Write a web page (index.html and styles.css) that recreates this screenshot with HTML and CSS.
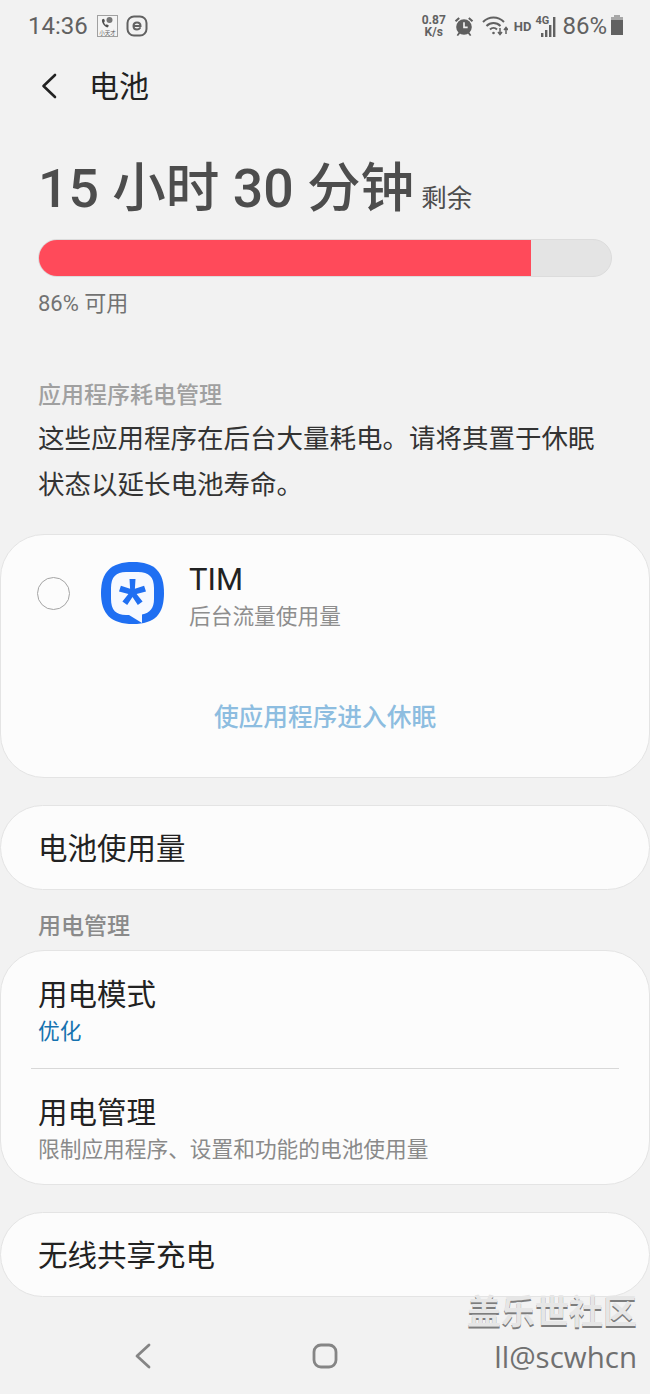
FILE: index.html
```html
<!DOCTYPE html>
<html lang="zh-CN">
<head>
    <meta charset="UTF-8">
    <meta name="viewport" content="width=device-width, initial-scale=1.0">
    <title>电池</title>
    <link rel="stylesheet" href="styles.css">
</head>
<body>
    <div class="status-bar">
        <div class="status-left">
            <span class="clock">14:36</span>
            <span class="app-badge">
                <svg width="21" height="22" viewBox="0 0 21 22" fill="none"><rect x="0.5" y="0.5" width="20" height="21" fill="#f4f4f4" stroke="#a0a0a0"/><path d="M5 4.500c-.5 3 2 7 5.500 8l1.500-1.800-2.200-1.500-1 .8c-1-.8-1.600-1.800-1.800-3l1-.8-1-2.500z" fill="#4f4f4f"/><circle cx="12.500" cy="5" r="3" fill="#777"/><text x="10.500" y="19.500" text-anchor="middle" font-size="5.500" fill="#666">小天才</text></svg>
            </span>
            <svg class="e-badge" width="22" height="22" viewBox="0 0 22 22" fill="none"><rect x="1.500" y="1.500" width="19" height="19" rx="6.500" stroke="#616161" stroke-width="2"/><path d="M7.500 11h7c0-2.200-1.500-3.500-3.500-3.500S7.500 9 7.500 11s1.500 3.500 3.500 3.500c1.300 0 2.300-.5 3-1.500" stroke="#616161" stroke-width="2" stroke-linecap="round"/></svg>
        </div>
        <div class="status-right">
            <span class="net-speed">0.87<br>K/s</span>
            <svg class="alarm" width="22" height="24" viewBox="0 0 24 24" fill="#5f5f5f"><circle cx="12" cy="13" r="8.500"/><path d="M2 6l4-3.500 1.500 1.500-4 3.500zM22 6l-4-3.500L16.500 4l4 3.500zM6 19l-2 3 1.500 1 2.500-3zM18 19l2 3-1.500 1-2.500-3z"/><path d="M12 8v5.500h4" stroke="#f2f2f2" stroke-width="1.800" fill="none"/></svg>
            <svg class="wifi" width="26" height="22" viewBox="0 0 26 22" fill="none" stroke="#616161" stroke-width="2"><path d="M1 7c6-6 15-6 21 0"/><path d="M4.500 11c4-4 10-4 14 0"/><path d="M8 14.500c2-2 5-2 7 0"/><circle cx="11.500" cy="18" r="1.300" fill="#616161" stroke="none"/><path d="M18 13v6M16 17l2 2.500 2-2.500M24 19v-6M22 15l2-2.500 2 2.500" stroke-width="1.500"/></svg>
            <span class="hd">HD</span>
            <span class="signal">
                <span class="lte">4G</span>
                <svg width="22" height="24" viewBox="0 0 22 24" fill="#616161"><rect x="6" y="19" width="2.400" height="4"/><rect x="10" y="16" width="2.400" height="7"/><rect x="14" y="11" width="2.400" height="12"/><rect x="18" y="3" width="2.400" height="20"/></svg>
            </span>
            <span class="battery-pct">86%</span>
            <svg width="14" height="22" viewBox="0 0 14 22" fill="#616161"><rect x="4" y="0" width="6" height="3" fill="#a8a8a8"/><rect x="1" y="2" width="12" height="3" fill="#a8a8a8"/><rect x="1" y="5" width="12" height="15"/></svg>
        </div>
    </div>

    <div class="app-bar">
        <svg class="back" width="24" height="28" viewBox="0 0 24 28" fill="none" stroke="#222" stroke-width="2.600" stroke-linecap="round" stroke-linejoin="round"><path d="M17 3L5.500 14 17 25"/></svg>
        <h1>电池</h1>
    </div>

    <div class="summary">
        <div class="time-left"><span class="time-big">15 小时 30 分钟</span><span class="time-small">剩余</span></div>
        <div class="battery-bar"><div class="battery-fill" style="width: 86%"></div></div>
        <p class="available">86% 可用</p>
    </div>

    <div class="section">
        <div class="section-label">应用程序耗电管理</div>
        <p class="section-text">这些应用程序在后台大量耗电。请将其置于休眠状态以延长电池寿命。</p>
    </div>

    <div class="card app-card">
        <div class="app-row">
            <span class="radio"></span>
            <svg class="tim-icon" width="64" height="64" viewBox="0 0 64 64"><path d="M32 0C54 0 63 10 63 31S54 62 32 62 0 52 0 31 10 0 32 0z" fill="#1f6ff2"/><path d="M25 10h12c11 0 16 5 16 16v11c0 9-4 14-12 15.500V61L28 53h-3C15 53 10 48 10 37V26C10 15 15 10 25 10z" fill="#f6f9ff"/><path d="M28.500 17h6l-.6 9.800 9.200-3 1.900 5.600-9.400 2.600 6 7.600-4.800 3.500-5.300-8-5.300 8-4.800-3.500 6-7.600-9.400-2.600 1.900-5.600 9.200 3z" fill="#1f6ff2"/></svg>
            <div class="app-info">
                <div class="app-name">TIM</div>
                <div class="app-sub">后台流量使用量</div>
            </div>
        </div>
        <div class="sleep-action">使应用程序进入休眠</div>
    </div>

    <div class="card single-row">电池使用量</div>

    <div class="group-label">用电管理</div>

    <div class="card list-card">
        <div class="list-item">
            <div class="item-title">用电模式</div>
            <div class="item-value">优化</div>
        </div>
        <div class="divider"></div>
        <div class="list-item last">
            <div class="item-title">用电管理</div>
            <div class="item-desc">限制应用程序、设置和功能的电池使用量</div>
        </div>
    </div>

    <div class="card single-row">无线共享充电</div>

    <div class="nav-bar">
        <svg width="18" height="28" viewBox="0 0 18 28" fill="none" stroke="#858585" stroke-width="2.800" stroke-linecap="round" stroke-linejoin="round"><path d="M15 3L3 14l12 11"/></svg>
        <svg width="26" height="26" viewBox="0 0 26 26" fill="none" stroke="#858585" stroke-width="2.800"><rect x="2" y="2" width="22" height="22" rx="7"/></svg>
        <span class="nav-spacer"></span>
    </div>

    <div class="watermark">
        <div class="wm-title">盖乐世社区</div>
        <div class="wm-user">ll@scwhcn</div>
    </div>
</body>
</html>
```

FILE: styles.css
```css
* {
    box-sizing: border-box;
}

html, body {
    margin: 0;
    padding: 0;
}

body {
    position: relative;
    width: 650px;
    height: 1394px;
    overflow: hidden;
    background: #f2f2f2;
    color: #222;
    font-family: Roboto, "Noto Sans CJK SC", sans-serif;
}

p {
    margin: 0;
}

.status-bar {
    display: flex;
    justify-content: space-between;
    align-items: center;
    height: 50px;
    padding: 2px 26px 0 28px;
    color: #616161;
}

.status-left,
.status-right {
    display: flex;
    align-items: center;
}

.clock {
    font-size: 24px;
    margin-right: 9px;
}

.app-badge {
    display: flex;
    margin-right: 8px;
}

.net-speed {
    font-size: 12px;
    line-height: 12px;
    font-weight: 700;
    text-align: center;
    margin-right: 7px;
}

.alarm {
    margin-right: 7px;
}

.hd {
    font-size: 13px;
    font-weight: 700;
    margin-left: 6px;
}

.signal {
    position: relative;
    display: flex;
    width: 22px;
    margin-left: 4px;
}

.lte {
    position: absolute;
    left: 0;
    top: 0;
    font-size: 11px;
    line-height: 13px;
    font-weight: 700;
}

.battery-pct {
    font-size: 24px;
    margin: 0 3px 0 5px;
}

.app-bar {
    display: flex;
    align-items: center;
    height: 72px;
    padding-left: 38px;
}

.back {
    margin-right: 27px;
}

.app-bar h1 {
    margin: 0 0 4px;
    font-size: 30px;
    font-weight: 400;
}

.summary {
    padding: 30px 38px 0;
}

.time-left {
    display: flex;
    align-items: baseline;
    height: 74px;
    color: #4d4d4d;
}

.time-big {
    font-size: 53.600px;
    line-height: 74px;
    font-weight: 500;
}

.time-small {
    font-size: 25.500px;
    margin-left: 7px;
}

.battery-bar {
    height: 38px;
    margin-top: 13px;
    background: #e4e4e4;
    border: 1px solid #dcdcdc;
    border-radius: 20px;
    overflow: hidden;
}

.battery-fill {
    height: 100%;
    background: #ff4a5a;
}

.available {
    margin-top: 12px;
    font-size: 22px;
    line-height: 30px;
    color: #727272;
}

.section {
    padding: 62px 38px 0;
}

.section-label {
    font-size: 23px;
    line-height: 30px;
    font-weight: 500;
    color: #a0a0a0;
}

.section-text {
    margin-top: 5px;
    font-size: 26.500px;
    line-height: 46px;
    color: #333;
}

.card {
    background: #fcfcfc;
    border: 1px solid #e4e4e4;
    border-radius: 44px;
}

.app-card {
    height: 244px;
    margin-top: 26px;
    padding: 27px 36px 0;
}

.app-row {
    display: flex;
    align-items: flex-start;
}

.radio {
    width: 33px;
    height: 33px;
    margin: 15px 31px 0 0;
    border: 1.500px solid #a4a4a4;
    border-radius: 50%;
}

.tim-icon {
    margin-right: 24px;
}

.app-name {
    font-size: 31px;
    line-height: 36px;
    color: #222;
}

.app-sub {
    font-size: 21.700px;
    line-height: 38px;
    color: #8e8e8e;
}

.sleep-action {
    margin-top: 65px;
    text-align: center;
    font-size: 24.700px;
    line-height: 34px;
    font-weight: 500;
    color: #8dbde0;
}

.single-row {
    display: flex;
    align-items: center;
    height: 85px;
    margin-top: 27px;
    padding: 0 0 4px 37px;
    font-size: 29.500px;
}

.group-label {
    margin-top: 22px;
    padding-left: 38px;
    font-size: 23px;
    line-height: 30px;
    font-weight: 500;
    color: #8a8a8a;
}

.list-card {
    height: 235px;
    margin-top: 8px;
    padding: 0 30px;
}

.list-item {
    height: 117px;
    padding: 24px 7px 0;
}

.list-item.last {
    height: 115px;
}

.divider {
    height: 1px;
    background: #d8d8d8;
}

.item-title {
    font-size: 29.500px;
    line-height: 40px;
}

.item-value {
    font-size: 21.700px;
    line-height: 34px;
    color: #1572b0;
}

.item-desc {
    font-size: 21.700px;
    line-height: 34px;
    color: #8a8a8a;
}

.nav-bar {
    display: grid;
    grid-template-columns: repeat(3, 1fr);
    justify-items: center;
    align-items: center;
    width: 546px;
    margin: 0 auto;
    height: 97px;
    padding-top: 21px;
}

.nav-spacer {
    width: 18px;
}

/* watermark sits over the bottom card */
.watermark {
    position: absolute;
    right: 13px;
    top: 1292px;
    text-align: right;
}

.wm-title {
    font-size: 34px;
    line-height: 40px;
    font-weight: 700;
    color: #e6e6e6;
    text-shadow: 0 2px 0 #7d7d7d;
}

.wm-user {
    margin-top: 7px;
    font-size: 29.500px;
    line-height: 36px;
    font-family: "Open Sans", sans-serif;
    color: #707070;
}
```
